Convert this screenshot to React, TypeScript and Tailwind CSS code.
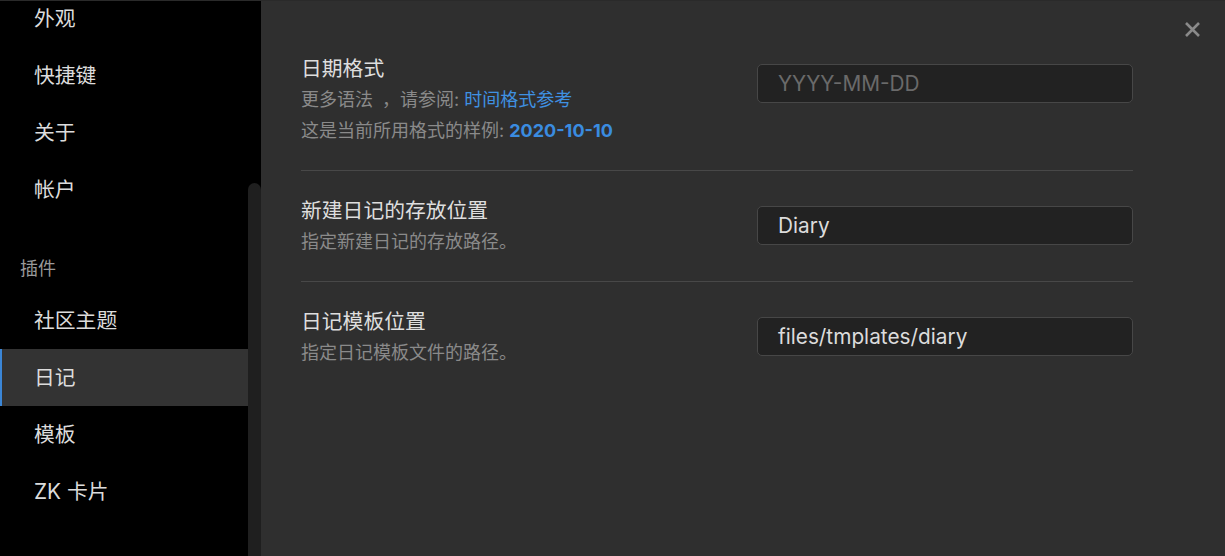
import React from 'react';

const font = { fontFamily: 'Inter, "Noto Sans CJK SC", sans-serif' };

const navTop = ['外观', '快捷键', '关于', '帐户'];
const navPlugins = ['社区主题', '日记', '模板', 'ZK 卡片'];

const NavItem: React.FC<{ label: string; active?: boolean }> = ({ label, active }) => (
  <div
    className={
      'h-[57px] flex items-center pl-[32px] text-[20.8px] text-[#dcdcdc] border-l-2 ' +
      (active ? 'bg-[#333333] border-[#3b86d6]' : 'border-transparent')
    }
  >
    {label}
  </div>
);

const Section: React.FC<{
  title: string;
  lines: React.ReactNode[];
  value?: string;
  placeholder?: string;
  last?: boolean;
}> = ({ title, lines, value, placeholder, last }) => (
  <div className={'flex items-start justify-between py-[24px] ' + (last ? '' : 'border-b border-[#484848]')}>
    <div className="flex flex-col">
      <div className="text-[20.8px] leading-[31px] text-[#dedede]">{title}</div>
      {lines.map((l, i) => (
        <div key={i} className="text-[18px] leading-[31px] text-[#8a8a8a]">
          {l}
        </div>
      ))}
    </div>
    <div className="mt-[11px] w-[376px] h-[39px] rounded-[5px] border border-[#474747] bg-[#222222] flex items-center px-[20px] text-[20.8px]">
      {value ? (
        <span className="text-[#dcdcdc]">{value}</span>
      ) : (
        <span className="text-[#6a6a6a]">{placeholder}</span>
      )}
    </div>
  </div>
);

export default function App() {
  return (
    <div className="w-[1225px] h-[556px] flex overflow-hidden bg-[#2f2f2f] border-t border-[#2a2a2a]" style={font}>
      {/* sidebar */}
      <div className="flex h-full shrink-0">
        <div className="w-[248px] h-full bg-black overflow-hidden">
          <div className="-mt-[11px]">
            {navTop.map((n) => (
              <NavItem key={n} label={n} />
            ))}
            <div className="h-[74px] pt-[40px] pl-[20px] text-[18px] leading-[22px] text-[#9a9a9a]">插件</div>
            {navPlugins.map((n) => (
              <NavItem key={n} label={n} active={n === '日记'} />
            ))}
          </div>
        </div>
        <div className="w-[13px] h-full bg-black overflow-hidden">
          <div className="mt-[182px] h-[600px] rounded-t-full bg-[#1f1f1f]" />
        </div>
      </div>

      {/* main */}
      <div className="flex-1 flex h-full">
        <div className="flex-1 pl-[40px] pr-[92px] pt-[28px]">
          <Section
            title="日期格式"
            lines={[
              <>
                更多语法<span className="ml-[9px]">，</span>请参阅: <span className="text-[#3f91e2]">时间格式参考</span>
              </>,
              <>
                这是当前所用格式的样例: <span className="text-[#3a8ce0] font-bold">2020-10-10</span>
              </>,
            ]}
            placeholder="YYYY-MM-DD"
          />
          <Section title="新建日记的存放位置" lines={['指定新建日记的存放路径。']} value="Diary" />
          <Section title="日记模板位置" lines={['指定日记模板文件的路径。']} value="files/tmplates/diary" last />
        </div>
        <div className="absolute right-[24px] top-[21px] w-[17px] h-[17px]">
          <svg viewBox="0 0 17 17" width="17" height="17">
            <path d="M2 2 L15 15 M15 2 L2 15" stroke="#8a8a8a" strokeWidth="2.6" strokeLinecap="butt" />
          </svg>
        </div>
      </div>
    </div>
  );
}
